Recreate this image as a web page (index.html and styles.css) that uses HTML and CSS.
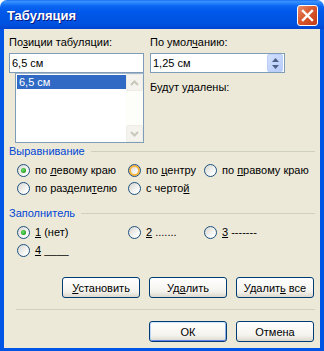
FILE: index.html
```html
<!DOCTYPE html>
<html>

<head>
    <meta charset="UTF-8">
    <title>Табуляция</title>
    <link rel="stylesheet" href="styles.css">
</head>

<body>
    <div class="window">
        <div class="titlebar">
            <span class="title">Табуляция</span>
            <span class="close">
                <svg width="13" height="13" viewBox="0 0 13 13">
                    <path d="M2 2 L11 11 M11 2 L2 11" stroke="#fff" stroke-width="2.4" stroke-linecap="square"/>
                </svg>
            </span>
        </div>
        <div class="client">
            <div class="top">
                <div class="col">
                    <div class="label">По<u>з</u>иции табуляции:</div>
                    <div class="field">6,5 см</div>
                    <div class="list">
                        <div class="items">
                            <div class="item sel">6,5 см</div>
                        </div>
                        <div class="vscroll">
                            <span class="sbtn">
                                <svg width="9" height="6" viewBox="0 0 9 6"><path d="M1 5 L4.5 1.5 L8 5" fill="none" stroke="#c9c7ba" stroke-width="2"/></svg>
                            </span>
                            <span class="track"></span>
                            <span class="sbtn">
                                <svg width="9" height="6" viewBox="0 0 9 6"><path d="M1 1 L4.5 4.5 L8 1" fill="none" stroke="#c9c7ba" stroke-width="2"/></svg>
                            </span>
                        </div>
                    </div>
                </div>
                <div class="col">
                    <div class="label">По умол<u>ч</u>анию:</div>
                    <div class="field spin">
                        <span>1,25 см</span>
                        <span class="spinbtn">
                            <svg width="7" height="4" viewBox="0 0 7 4"><path d="M0 4 L3.5 0 L7 4 Z" fill="#4d6185"/></svg>
                            <svg width="7" height="4" viewBox="0 0 7 4"><path d="M0 0 L3.5 4 L7 0 Z" fill="#4d6185"/></svg>
                        </span>
                    </div>
                    <div class="label note">Будут удалены:</div>
                </div>
            </div>

            <div class="group">
                <div class="group-head"><span>Выравнивание</span></div>
                <div class="options">
                    <div class="opt"><span class="radio checked"></span><span>по <u>л</u>евому краю</span></div>
                    <div class="opt"><span class="radio hot"></span><span>по <u>ц</u>ентру</span></div>
                    <div class="opt"><span class="radio"></span><span>по <u>п</u>равому краю</span></div>
                    <div class="opt"><span class="radio"></span><span>по раздели<u>т</u>елю</span></div>
                    <div class="opt"><span class="radio"></span><span>с черто<u>й</u></span></div>
                </div>
            </div>

            <div class="group second">
                <div class="group-head"><span>Заполнитель</span></div>
                <div class="options">
                    <div class="opt"><span class="radio checked"></span><span><u>1</u> (нет)</span></div>
                    <div class="opt"><span class="radio"></span><span><u>2</u> .......</span></div>
                    <div class="opt"><span class="radio"></span><span><u>3</u> -------</span></div>
                    <div class="opt"><span class="radio"></span><span><u>4</u> ____</span></div>
                </div>
            </div>

            <div class="buttons upper">
                <div class="btn"><span><u>У</u>становить</span></div>
                <div class="btn"><span>Уд<u>а</u>лить</span></div>
                <div class="btn"><span>Удалит<u>ь</u> все</span></div>
            </div>
            <div class="sep"></div>
            <div class="buttons">
                <div class="btn default">ОК</div>
                <div class="btn">Отмена</div>
            </div>
        </div>
    </div>
</body>
</html>
```

FILE: styles.css
```css
* {
    margin: 0;
    padding: 0;
    box-sizing: border-box;
}

body {
    background: #fff;
    font-family: Tahoma, "Liberation Sans", sans-serif;
    font-size: 11px;
    color: #000;
}

u {
    text-decoration: underline;
    text-underline-offset: 1px;
}

.window {
    width: 324px;
    height: 351px;
    display: flex;
    flex-direction: column;
}

.titlebar {
    height: 29px;
    flex: none;
    border-radius: 7px 7px 0 0;
    background: linear-gradient(to bottom, #0a5cf0 0, #3d95ff 1px, #2a86fc 3px, #0a66f2 6px, #0058ea 12px, #0054e3 20px, #0050de 25px, #0044d0 29px);
    display: flex;
    align-items: center;
    justify-content: space-between;
    padding: 1px 6px 0 7px;
}

.title {
    color: #fff;
    font-family: "Liberation Sans", sans-serif;
    font-weight: bold;
    font-size: 13px;
    text-shadow: 1px 1px #0a1883;
}

.close {
    width: 21px;
    height: 21px;
    border: 1px solid #fff;
    border-radius: 3px;
    background: linear-gradient(135deg, #e98e6c, #d9582f 45%, #c13a13);
    display: flex;
    align-items: center;
    justify-content: center;
}

.client {
    flex: 1;
    background: #ece9d8;
    border: solid #0055e5;
    border-width: 0 4px 4px 4px;
    padding: 7px 5px 6px 5px;
    display: flex;
    flex-direction: column;
}

.top {
    display: flex;
    gap: 6px;
}

.col {
    width: 135px;
    display: flex;
    flex-direction: column;
}

.label {
    line-height: 13px;
    height: 13px;
    white-space: nowrap;
}

.note {
    margin-top: 8px;
}

.field {
    margin-top: 4px;
    height: 20px;
    border: 1px solid #7f9db9;
    background: #fff;
    padding: 0 2px;
    line-height: 18px;
}

.spin {
    display: flex;
    justify-content: space-between;
    padding-right: 1px;
}

.spinbtn {
    width: 16px;
    height: 18px;
    border-radius: 2px;
    background: linear-gradient(135deg, #d3e0fd, #b6cbfa);
    border: 1px solid #bccff9;
    display: flex;
    flex-direction: column;
    align-items: center;
    justify-content: center;
    gap: 3px;
}

.list {
    margin-left: 6px;
    width: 129px;
    height: 70px;
    border: 1px solid #7f9db9;
    border-top-color: #a5b8cc;
    background: #fff;
    display: flex;
}

.items {
    flex: 1;
}

.item {
    margin: 1px 0 0 1px;
    height: 14px;
    line-height: 14px;
    padding-left: 2px;
}

.item.sel {
    background: #316ac5;
    color: #fff;
}

.vscroll {
    width: 17px;
    background: #fdfdfa;
    display: flex;
    flex-direction: column;
}

.track {
    flex: 1;
}

.sbtn {
    height: 17px;
    border: 1px solid #eeede5;
    border-radius: 2px;
    background: #f4f3ee;
    display: flex;
    align-items: center;
    justify-content: center;
}

.group {
    margin-top: 2px;
}

.group.second {
    margin-top: 10px;
}

.group-head {
    display: flex;
    align-items: center;
    color: #0046d5;
    line-height: 13px;
}

.group-head::after {
    content: '';
    flex: 1;
    border-top: 1px solid #d0d0bf;
    margin-left: 6px;
}

.options {
    margin-top: 3px;
    padding-left: 8px;
    display: grid;
    grid-template-columns: 111px 76px auto;
    grid-auto-rows: 18px;
    align-items: center;
}

.opt {
    display: flex;
    align-items: center;
    white-space: pre;
}

.radio {
    flex: none;
    position: relative;
    width: 13px;
    height: 13px;
    margin-right: 5px;
    border-radius: 50%;
    border: 1px solid #1c5180;
    background: linear-gradient(135deg, #d6d5cf, #fff 80%);
}

.radio.checked::after {
    content: '';
    position: absolute;
    left: 3px;
    top: 3px;
    width: 5px;
    height: 5px;
    border-radius: 50%;
    background: radial-gradient(circle at 40% 40%, #6ee06e, #21a121 70%);
}

.radio.hot {
    box-shadow: inset 0 0 0 2px #f8b33a;
}

.buttons {
    display: flex;
    justify-content: flex-end;
    gap: 9px;
    padding-right: 1px;
}

.buttons.upper {
    margin-top: 18px;
}

.btn {
    width: 78px;
    height: 21px;
    border: 1px solid #003c74;
    border-radius: 3px;
    background: linear-gradient(to bottom, #fff, #f4f3ee 70%, #dcd8cc);
    display: flex;
    align-items: center;
    justify-content: center;
    white-space: pre;
}

.btn.default {
    box-shadow: inset 0 1px 0 #cee7ff, inset 1px 0 0 #bcd4f6, inset -1px 0 0 #89ade4, inset 0 -1px 0 #6982ee;
}

.sep {
    margin: 11px 0 11px 7px;
    border-top: 1px solid #d0d0bf;
}
```
